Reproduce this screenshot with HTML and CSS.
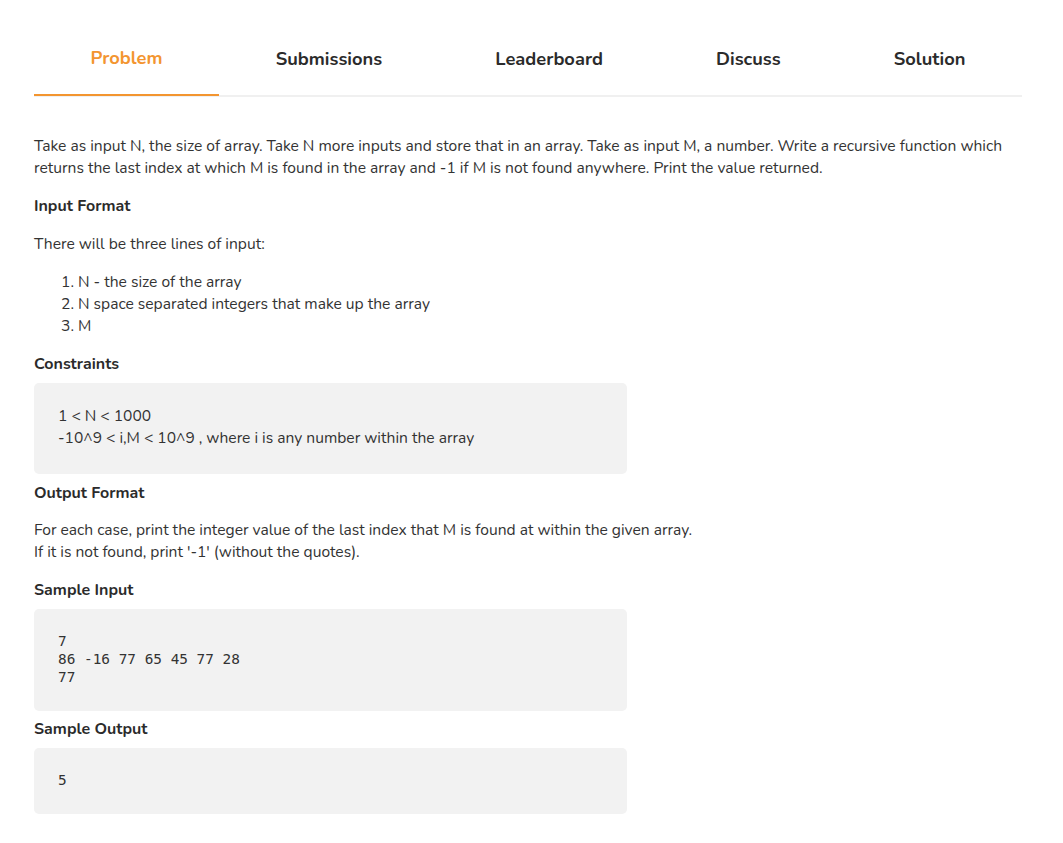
FILE: index.html
```html
<!DOCTYPE html>
<html>
<head>
<meta charset="utf-8">
<link rel="stylesheet" href="styles.css">
</head>
<body>
<div class="page">
  <nav class="tabs">
    <div class="tab active">Problem</div>
    <div class="tab">Submissions</div>
    <div class="tab">Leaderboard</div>
    <div class="tab">Discuss</div>
    <div class="tab">Solution</div>
  </nav>
  <main class="content">
    <p class="text">Take as input N, the size of array. Take N more inputs and store that in an array. Take as input M, a number. Write a recursive function which returns the last index at which M is found in the array and -1 if M is not found anywhere. Print the value returned.</p>
    <h3 class="heading">Input Format</h3>
    <p class="text">There will be three lines of input:</p>
    <ol class="list">
      <li>N - the size of the array</li>
      <li>N space separated integers that make up the array</li>
      <li>M</li>
    </ol>
    <h3 class="heading tight">Constraints</h3>
    <div class="box">1 &lt; N &lt; 1000<br>-10^9 &lt; i,M &lt; 10^9 , where i is any number within the array</div>
    <h3 class="heading">Output Format</h3>
    <p class="text">For each case, print the integer value of the last index that M is found at within the given array.<br>If it is not found, print '-1' (without the quotes).</p>
    <h3 class="heading tight">Sample Input</h3>
    <pre class="box code">7
86 -16 77 65 45 77 28
77</pre>
    <h3 class="heading tight">Sample Output</h3>
    <pre class="box code">5</pre>
  </main>
</div>
</body>
</html>
```

FILE: styles.css
```css
html, body {
  margin: 0;
  padding: 0;
  background: #ffffff;
}
body {
  font-family: "Nunito", "Lato", "Open Sans", sans-serif;
  color: #333333;
}
.page {
  width: 988px;
  margin-left: 34px;
}
.tabs {
  display: flex;
  padding-top: 47px;
  border-bottom: 2px solid #f0f0f0;
}
.tab {
  flex: 1 1 auto;
  text-align: center;
  font-size: 18.3px;
  font-weight: 700;
  line-height: 24px;
  color: #2b2b2b;
  padding-bottom: 23px;
  margin-bottom: -2px;
  border-bottom: 2px solid transparent;
}
.tab.active {
  color: #f39530;
  border-bottom-color: #f39530;
  transform: translateY(-1px);
  padding-bottom: 24px;
}
.content {
  padding-top: 38px;
}
.text {
  margin: 0 0 16px;
  font-size: 15.6px;
  line-height: 22px;
}
.heading {
  margin: 0 0 15.5px;
  font-size: 16px;
  line-height: 22px;
  font-weight: 700;
  color: #2b2b2b;
}
.heading.tight {
  margin-bottom: 8px;
}
.list {
  margin: 0 0 16px;
  padding-left: 44px;
  font-size: 15.6px;
  line-height: 22px;
}
.box {
  width: 593px;
  box-sizing: border-box;
  background: #f2f2f2;
  border-radius: 5px;
  padding: 22px 24px 25px;
  margin: 0 0 8px;
  font-size: 15.6px;
  line-height: 22px;
}
.code {
  font-family: "DejaVu Sans Mono", "Liberation Mono", monospace;
  font-size: 14.4px;
  line-height: 18px;
  padding: 23px 24px 25px;
  white-space: pre;
  margin-bottom: 7px;
}
```
